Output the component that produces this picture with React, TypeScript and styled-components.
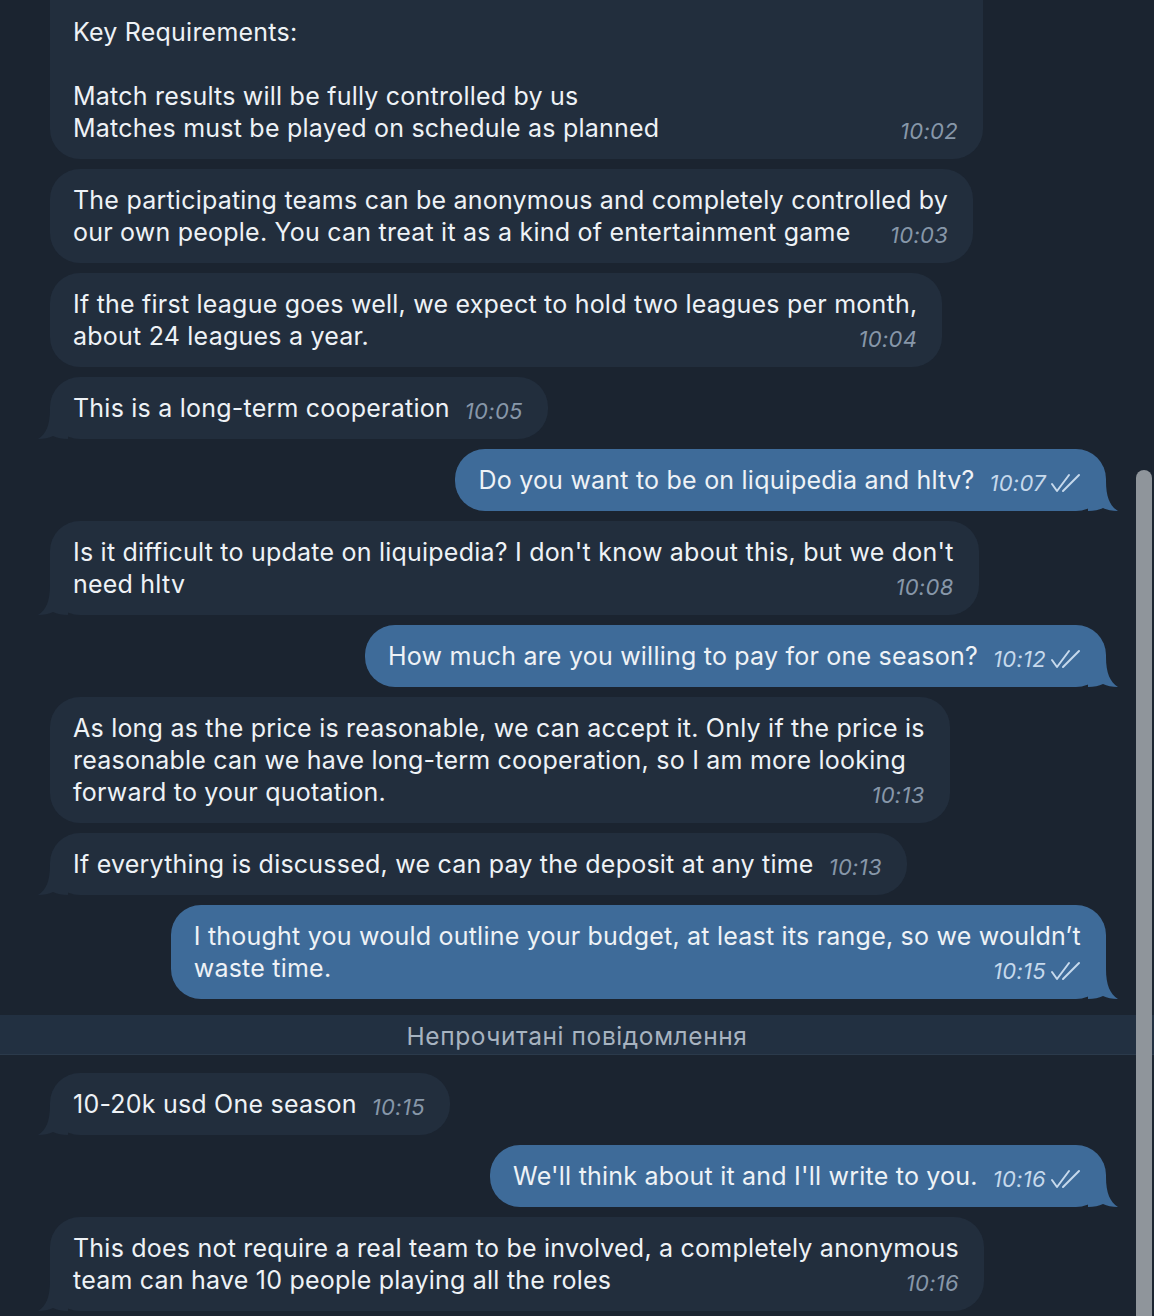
import React from "react";
import styled, { createGlobalStyle } from "styled-components";

const GlobalStyle = createGlobalStyle`
  html, body {
    margin: 0;
    padding: 0;
    background: #1b2430;
    overflow: hidden;
  }
  body {
    font-family: Inter, "Noto Sans", sans-serif;
    color: #eef2f6;
  }
`;

const Page = styled.div`
  position: relative;
  width: 1154px;
  height: 1316px;
  overflow: hidden;
  background: #1b2430;
`;

const List = styled.div`
  display: flex;
  flex-direction: column;
  gap: 10px;
  margin-top: -31px;
`;

const Row = styled.div<{ $out?: boolean }>`
  display: flex;
  justify-content: ${(p) => (p.$out ? "flex-end" : "flex-start")};
  padding: 0 48px 0 50px;
`;

const Bubble = styled.div<{ $out?: boolean; $width?: number }>`
  position: relative;
  display: inline-flex;
  flex-direction: column;
  box-sizing: border-box;
  ${(p) => (p.$width ? `width: ${p.$width}px;` : "")}
  padding: 15px 25px 15px 23px;
  border-radius: 30px;
  background: ${(p) => (p.$out ? "#3e6b99" : "#222e3d")};
  font-size: 25px;
  line-height: 32px;
  letter-spacing: 0.22px;
  white-space: nowrap;
`;

const Line = styled.div`
  height: 32px;
`;

const LastLine = styled.div`
  height: 32px;
  display: flex;
  align-items: baseline;
  gap: 15px;
`;

const Meta = styled.span<{ $out?: boolean }>`
  margin-left: auto;
  display: inline-flex;
  align-items: center;
  gap: 4px;
  font-style: italic;
  font-size: 22px;
  line-height: 32px;
  letter-spacing: 0.3px;
  color: ${(p) => (p.$out ? "#c6d9ec" : "#8797a9")};
  transform: translateY(2px);
`;

const TailSvg = styled.svg<{ $out?: boolean }>`
  position: absolute;
  bottom: 0;
  width: 30px;
  height: 30px;
  ${(p) => (p.$out ? "right: -12px; transform: scaleX(-1);" : "left: -12px;")}
`;

const Divider = styled.div`
  margin: 6px 0 8px 0;
  height: 40px;
  display: flex;
  align-items: center;
  justify-content: center;
  background: #223041;
  border-bottom: 1px solid #2b3a4b;
  box-sizing: border-box;
  font-size: 24.5px;
  color: #a7b3c0;
  letter-spacing: 0.6px;
  padding-top: 3px;
`;

const Scrollbar = styled.div`
  position: absolute;
  right: 2px;
  top: 470px;
  bottom: 0;
  width: 16px;
  border-radius: 8px 8px 0 0;
  background: #8f959b;
`;

const Tail = ({ out, color }: { out?: boolean; color: string }) => (
  <TailSvg $out={out} viewBox="0 0 30 30">
    <path d="M12 0 C12 16 8 25 0 30 C6 30 11 29 15 27 C19 29 24 30 30 30 L30 0 Z" fill={color} />
  </TailSvg>
);

const Checks = () => (
  <svg width="31" height="22" viewBox="0 0 31 22" fill="none" stroke="#c6d9ec" strokeWidth="2" strokeLinecap="round" strokeLinejoin="round">
    <path d="M2 12 L7 19 L19 3" />
    <path d="M13 19 L29 3" />
  </svg>
);

type MessageProps = {
  lines: string[];
  time: string;
  out?: boolean;
  tail?: boolean;
  width?: number;
};

const Message = ({ lines, time, out, tail, width }: MessageProps) => {
  const head = lines.slice(0, -1);
  const last = lines[lines.length - 1];
  return (
    <Row $out={out}>
      <Bubble $out={out} $width={width}>
        {head.map((l, i) => (
          <Line key={i}>{l}</Line>
        ))}
        <LastLine>
          <span>{last}</span>
          <Meta $out={out}>
            {time}
            {out && <Checks />}
          </Meta>
        </LastLine>
        {tail && <Tail out={out} color={out ? "#3e6b99" : "#222e3d"} />}
      </Bubble>
    </Row>
  );
};

export default function App() {
  return (
    <Page>
      <GlobalStyle />
      <List>
        <Message
          width={933}
          lines={["", "Key Requirements:", "", "Match results will be fully controlled by us", "Matches must be played on schedule as planned"]}
          time="10:02"
        />
        <Message
          lines={[
            "The participating teams can be anonymous and completely controlled by",
            "our own people. You can treat it as a kind of entertainment game",
          ]}
          time="10:03"
        />
        <Message
          lines={["If the first league goes well, we expect to hold two leagues per month,", "about 24 leagues a year."]}
          time="10:04"
        />
        <Message lines={["This is a long-term cooperation"]} time="10:05" tail />
        <Message out tail lines={["Do you want to be on liquipedia and hltv?"]} time="10:07" />
        <Message
          tail
          lines={["Is it difficult to update on liquipedia? I don't know about this, but we don't", "need hltv"]}
          time="10:08"
        />
        <Message out tail lines={["How much are you willing to pay for one season?"]} time="10:12" />
        <Message
          lines={[
            "As long as the price is reasonable, we can accept it. Only if the price is",
            "reasonable can we have long-term cooperation, so I am more looking",
            "forward to your quotation.",
          ]}
          time="10:13"
        />
        <Message tail lines={["If everything is discussed, we can pay the deposit at any time"]} time="10:13" />
        <Message
          out
          tail
          lines={["I thought you would outline your budget, at least its range, so we wouldn’t", "waste time."]}
          time="10:15"
        />
        <Divider>Непрочитані повідомлення</Divider>
        <Message tail lines={["10-20k usd One season"]} time="10:15" />
        <Message out tail lines={["We'll think about it and I'll write to you."]} time="10:16" />
        <Message
          tail
          lines={["This does not require a real team to be involved, a completely anonymous", "team can have 10 people playing all the roles"]}
          time="10:16"
        />
      </List>
      <Scrollbar />
    </Page>
  );
}
